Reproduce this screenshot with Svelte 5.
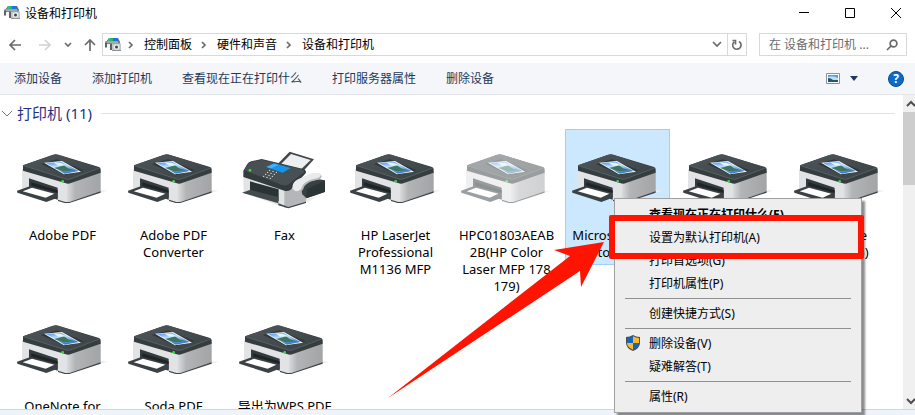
<script lang="ts">
	type Device = { name: string; kind?: 'fax'; offline?: boolean };
	type Entry = { label: string; bold?: boolean; shield?: boolean };

	const crumbs = ['控制面板', '硬件和声音', '设备和打印机'];
	const commands = ['添加设备', '添加打印机', '查看现在正在打印什么', '打印服务器属性', '删除设备'];

	const devices: Device[] = [
		{ name: 'Adobe PDF' },
		{ name: 'Adobe PDF Converter' },
		{ name: 'Fax', kind: 'fax' },
		{ name: 'HP LaserJet Professional M1136 MFP' },
		{ name: 'HPC01803AEAB2B(HP Color Laser MFP 178 179)', offline: true },
		{ name: 'Microsoft Print to PDF' },
		{ name: 'Microsoft XPS' },
		{ name: 'OneNote (Desktop)' },
		{ name: 'OneNote for' },
		{ name: 'Soda PDF' },
		{ name: '导出为WPS PDF' }
	];

	const menu: Entry[][] = [
		[
			{ label: '查看现在正在打印什么(E)', bold: true },
			{ label: '设置为默认打印机(A)' },
			{ label: '打印首选项(G)' },
			{ label: '打印机属性(P)' }
		],
		[{ label: '创建快捷方式(S)' }],
		[{ label: '删除设备(V)', shield: true }, { label: '疑难解答(T)' }],
		[{ label: '属性(R)' }]
	];

	let selected = $state(5);
	let query = $state('');
</script>

{#snippet appIcon()}
	<svg class="app-icon" viewBox="0 0 16 14" aria-hidden="true">
		<path d="M1 4 4 0h9l2 4z" fill="#60676b" />
		<path d="M4 0h3l-1 3H3z" fill="#2fc0a0" />
		<path d="M6 0h3v3H5z" fill="#37b24a" />
		<path d="M8 0h4l1 3H8z" fill="#1277e8" />
		<path d="M0 3.5h15V6H0z" fill="#7d8387" />
		<path d="M2 3.5h11v1H2z" fill="#cfd5d8" />
		<path d="M0 5h2v4.500H0zM5 6h2v6H5z" fill="#5b6165" />
		<path d="M2 6h3v4H2z" fill="#f4f6f7" />
		<path d="M7 5.500h9V13H7z" fill="#c3c7ca" />
		<path d="M7 12h9v1H7z" fill="#8e9396" />
		<circle cx="11.5" cy="9" r="2.800" fill="#eceff0" />
		<circle cx="11.5" cy="9" r="1.500" fill="#3b4448" />
	</svg>
{/snippet}

{#snippet crumbArrow()}
	<svg class="crumb-arrow" viewBox="0 0 6 8" aria-hidden="true">
		<path d="m1 1 3 3-3 3" />
	</svg>
{/snippet}

{#snippet printer()}
	<svg class="device-icon" viewBox="33 48 309 192" aria-hidden="true">
		<defs>
			<linearGradient id="lid" x1="0" y1="0" x2="1" y2="1">
				<stop offset="0" stop-color="#4f5659" />
				<stop offset="1" stop-color="#3b4245" />
			</linearGradient>
			<linearGradient id="side" x1="0" x2="1">
				<stop offset="0" stop-color="#dcdddf" />
				<stop offset=".25" stop-color="#b3b4b6" />
				<stop offset="1" stop-color="#a3a4a6" />
			</linearGradient>
			<linearGradient id="photo" x1="0" y1="0" x2=".4" y2="1">
				<stop offset="0" stop-color="#3c86e8" />
				<stop offset=".45" stop-color="#b9dcfa" />
				<stop offset="1" stop-color="#3b7fc4" />
			</linearGradient>
		</defs>
		<path d="m296 180 28 2-30 7z" fill="#ececec" />
		<path d="M66 117 207 156v61l-12 1-21-8-108-35z" fill="#e2e3e5" />
		<path d="M201 156 302 124v61l-95 32-7 1z" fill="url(#side)" />
		<path d="m174 209 22 7h12l94-32v4l-94 31h-14l-20-6z" fill="#3d4447" />
		<path d="m87 145 86 28v36l-86-30z" fill="#353c3f" />
		<path d="m94 157 79 24v8l-79-22z" fill="#1f2527" />
		<path d="m51 182 38-13 84 21v13l-34 13-87-28z" fill="#3b4245" />
		<path d="m68 184 28-11 67 18-26 12z" fill="#fff" />
		<path d="M69 106 157 75q9-4 18-1l122 37q5 2 5 7v10l-89 31q-8 4-18 0L69 122z" fill="#363d40" />
		<path d="M70 106 158 75q8-3 16-1l124 39-85 33q-9 4-18 1z" fill="url(#lid)" />
		<path d="m70 107 128 40q8 2 15-1l86-32" fill="none" stroke="#646c70" stroke-width="2" />
		<path d="m123 102 48-14 80 33-54 14z" fill="#30373a" />
		<path d="m132 98 54-5 57 32-51 8z" fill="#f8fbfd" />
		<path d="m138 99 46-4 52 28-42 8z" fill="url(#photo)" />
		<path d="m163 114 12-3 17-5 12 9 20 6-34 3z" fill="#3d7462" />
		<path d="m160 97 21 1 16 8-22 1z" fill="#e7f4fe" />
		<circle cx="188" cy="154" r="4" fill="#35e23c" />
	</svg>
{/snippet}

{#snippet fax()}
	<svg class="device-icon" viewBox="24 48 309 192" aria-hidden="true">
		<path d="m240 206 33-4-29 16z" fill="#ececec" />
		<path d="m160 100 34-35 73 23-38 42z" fill="#41484b" />
		<path d="m169 101 29-29 59 18-35 34z" fill="#edf0f2" />
		<path d="M55 140 180 172l63 15v30l-53 16-34-9-100-35z" fill="#e2e3e5" />
		<path d="m178 170 65 15v32l-53 16h-12z" fill="#b4b6b8" />
		<path d="m160 220 30 11 53-16v4l-53 16-30-9z" fill="#3d4447" />
		<path d="m75 154 86 24v36l-86-29z" fill="#2b3235" />
		<path d="m51 188 25-9 84 22v19z" fill="#434b4e" />
		<path d="M55 122 67 102q4-6 12-8l31-7 122 29q14 4 10 14l-40 43q-8 13-24 9L55 141z" fill="#343b3e" />
		<path d="M58 121 69 103q4-6 12-8l30-6 119 29q10 3 7 9l-46 36q-8 5-20 2z" fill="#485053" />
		<path d="m123 111 24-11 50 14-24 14z" fill="#1496ee" />
		<path d="m125 111 22-10 14 4-22 10z" fill="#44b4fa" />
		<g fill="#eef1f2">
			{#each [0, 1, 2, 3] as row}
				{#each [0, 1, 2] as col}
					<circle cx={134 + col * 10 - row * 6} cy={121 + col * 3 + row * 6} r="2" />
				{/each}
			{/each}
		</g>
		<path d="m228 178 8-20 46-10 18 3v34l-56 20-12-12z" fill="#3a4144" />
		<path d="m246 176 54-24v34l-56 19z" fill="#2d3437" />
		<path
			d="M203 178q-3-19 15-28l44-20q22-4 28 8 0 9-12 11-28 4-40 20-6 20-20 22-12 0-15-13z"
			fill="#b5b8ba"
		/>
		<path
			d="M203 171q0-15 16-23l44-19q19-3 25 6-2 8-12 10-30 4-43 21-5 16-17 18-11 0-13-13z"
			fill="#e9ebec"
		/>
		<circle cx="75" cy="121" r="4" fill="#35e23c" />
	</svg>
{/snippet}

<div class="window">
	<header class="titlebar">
		{@render appIcon()}
		<h1>设备和打印机</h1>
		<div class="caption-buttons">
			<button type="button" aria-label="最小化">
				<svg viewBox="0 0 10 10"><path d="M0 4.5h10" /></svg>
			</button>
			<button type="button" aria-label="最大化">
				<svg viewBox="0 0 10 10"><path d="M.5.5h9v9h-9z" /></svg>
			</button>
			<button type="button" aria-label="关闭">
				<svg viewBox="0 0 10 10"><path d="m0 0 10 10M10 0 0 10" /></svg>
			</button>
		</div>
	</header>

	<nav class="navbar">
		<div class="history">
			<button type="button" aria-label="后退">
				<svg width="14" height="12" viewBox="0 0 14 12"><path d="M13 6H2m5-5L2 6l5 5" /></svg>
			</button>
			<button type="button" aria-label="前进" disabled>
				<svg width="14" height="12" viewBox="0 0 14 12"><path d="M1 6h11M7 1l5 5-5 5" /></svg>
			</button>
			<button class="recent" type="button" aria-label="最近">
				<svg width="8" height="6" viewBox="0 0 8 6"><path d="m1 1 3 3 3-3" /></svg>
			</button>
			<button type="button" aria-label="向上">
				<svg width="12" height="14" viewBox="0 0 12 14"><path d="M6 13V2M1 7l5-5 5 5" /></svg>
			</button>
		</div>
		<div class="address">
			{@render appIcon()}
			{#each crumbs as crumb}
				{@render crumbArrow()}
				<button class="crumb" type="button">{crumb}</button>
			{/each}
			<button class="drop" type="button" aria-label="展开">
				<svg width="10" height="7" viewBox="0 0 10 7"><path d="m1 1 4 4 4-4" /></svg>
			</button>
			<button class="refresh" type="button" aria-label="刷新">
				<svg width="12" height="12" viewBox="0 0 12 12">
					<path d="M8 2.4a4.2 4.2 0 1 1-4.800.4M1.500 1.500h3v4" />
				</svg>
			</button>
		</div>
		<label class="search">
			<input type="text" placeholder="在 设备和打印机 ..." aria-label="搜索" bind:value={query} />
			<svg width="12" height="12" viewBox="0 0 12 12" aria-hidden="true">
				<circle cx="7.5" cy="4.5" r="3.4" />
				<path d="M5 7 1 11" />
			</svg>
		</label>
	</nav>

	<div class="commands">
		{#each commands as command}
			<button type="button">{command}</button>
		{/each}
		<button class="view" type="button" aria-label="视图">
			<svg width="14" height="11" viewBox="0 0 14 11">
				<path d="M.5.5h13v10H.5z" fill="#fff" stroke="#8c8f94" />
				<path d="M2 2h10v3H2z" fill="#4d9be8" />
				<path d="M2 4q5-2 10 1v3H2z" fill="#b9def8" />
				<path d="M2 5q3 0 5 2h5v2H2z" fill="#26566f" />
			</svg>
		</button>
		<button class="view-more" type="button" aria-label="更多选项">
			<svg width="8" height="5" viewBox="0 0 8 5"><path d="M0 0h8L4 5z" fill="#1e395b" /></svg>
		</button>
		<button class="help" type="button" aria-label="帮助">?</button>
	</div>

	<div class="body">
		<main>
			<h2>
				<svg width="12" height="7" viewBox="0 0 12 7" aria-hidden="true">
					<path d="m1 1 5 5 5-5" fill="none" stroke="#777" />
				</svg>
				打印机 (11)
			</h2>
			<div class="devices">
				{#each devices as device, i}
					<button
						class="device"
						class:selected={selected === i}
						class:offline={device.offline}
						type="button"
						onclick={() => (selected = i)}
					>
						{#if device.kind === 'fax'}
							{@render fax()}
						{:else}
							{@render printer()}
						{/if}
						<span>{device.name}</span>
					</button>
				{/each}
			</div>
		</main>
		<div class="scrollbar">
			<svg viewBox="0 0 12 17" aria-hidden="true"><path d="m4 11 4-4 4 4" /></svg>
			<div class="track"><div class="thumb"></div></div>
			<svg viewBox="0 0 12 17" aria-hidden="true"><path d="m4 7 4 4 4-4" /></svg>
		</div>
	</div>
	<footer></footer>

	<div class="menu" role="menu">
		{#each menu as group}
			<div class="group" role="group">
				{#each group as entry}
					<button class:bold={entry.bold} type="button" role="menuitem">
						{#if entry.shield}
							<svg class="shield" viewBox="0 0 14 16" aria-hidden="true">
								<path d="M7 0q3 2 7 2v6q0 5-7 8-7-3-7-8V2q4 0 7-2z" fill="#4a4f55" />
								<path d="M7 1.3V8H1V3q3 0 6-1.700z" fill="#0b67c9" />
								<path d="M7 1.3V8h6V3q-3 0-6-1.700z" fill="#fdb827" />
								<path d="M1 8h6v6.800Q1 12 1 8z" fill="#fdb827" />
								<path d="M13 8H7v6.800Q13 12 13 8z" fill="#0b67c9" />
							</svg>
						{/if}
						{entry.label}
					</button>
				{/each}
			</div>
		{/each}
	</div>

	<svg class="arrow" viewBox="0 0 217 156" aria-hidden="true">
		<path d="M216 0 166 8l16 6L0 156l192-127 1 16z" fill="#fe1400" />
	</svg>
	<div class="frame"></div>
</div>

<style>
	:global(body) {
		margin: 0;
	}
	.window {
		position: relative;
		display: flex;
		flex-direction: column;
		height: 100vh;
		overflow: hidden;
		background: #fff;
		color: #000;
		font-family: 'Noto Sans', 'Noto Sans CJK SC', sans-serif;
		font-size: 12px;
		line-height: 17px;
	}
	button {
		border: none;
		background: transparent;
		padding: 0;
		color: inherit;
		font: inherit;
	}
	svg {
		display: block;
		flex: none;
	}
	.app-icon {
		width: 16px;
		height: 14px;
	}

	.titlebar {
		display: flex;
		align-items: center;
		gap: 5px;
		height: 26px;
		padding-left: 4px;
	}
	h1 {
		margin: 0;
		font-size: 12px;
		font-weight: normal;
	}
	.caption-buttons {
		display: flex;
		gap: 8px;
		margin-left: auto;
	}
	.caption-buttons button {
		display: flex;
		align-items: center;
		justify-content: center;
		width: 38px;
		height: 24px;
	}
	.caption-buttons svg {
		width: 10px;
		height: 10px;
		fill: none;
		stroke: #000;
	}

	.navbar {
		display: flex;
		align-items: center;
		padding: 7px 8px;
	}
	.navbar svg:not(.app-icon) {
		fill: none;
		stroke: #6b6b6b;
		stroke-width: 1.7;
	}
	.history {
		display: flex;
		align-items: center;
		gap: 16px;
		width: 94px;
	}
	.history button:disabled svg {
		stroke: #d2d2d2;
	}
	.history .recent {
		margin: 0 -4px;
	}
	.address {
		display: flex;
		flex: 1;
		align-items: center;
		box-sizing: border-box;
		height: 23px;
		border: 1px solid #d9d9d9;
		padding-left: 2px;
	}
	.address .app-icon {
		margin-right: -2px;
	}
	.crumb-arrow {
		width: 6px;
		height: 8px;
		margin: 0 10px 0 9px;
	}
	.drop {
		margin-left: auto;
		padding-right: 5px;
	}
	.refresh {
		display: flex;
		align-items: center;
		justify-content: center;
		width: 19px;
		height: 21px;
		border-left: 1px solid #d9d9d9;
	}
	.search {
		display: flex;
		align-items: center;
		box-sizing: border-box;
		width: 148px;
		height: 23px;
		margin-left: 12px;
		border: 1px solid #d9d9d9;
		padding: 0 8px 0 9px;
	}
	input {
		flex: 1;
		min-width: 0;
		border: none;
		outline: none;
		background: transparent;
		padding: 0;
		font: inherit;
	}
	input::placeholder {
		color: #6d6d6d;
	}

	.commands {
		display: flex;
		align-items: center;
		gap: 30px;
		height: 31px;
		border-bottom: 1px solid #e3e6ea;
		background: #f4f6f9;
		padding: 0 11px 0 14px;
		color: #1e395b;
	}
	.view {
		margin-left: auto;
	}
	.view-more {
		margin-left: -20px;
	}
	.help {
		width: 16px;
		height: 16px;
		box-sizing: border-box;
		border: 1px solid #0a4c8f;
		border-radius: 50%;
		background: #0b6bcb;
		color: #fff;
		font-weight: bold;
		line-height: 14px;
	}

	.body {
		display: flex;
		flex: 1;
		min-height: 0;
	}
	main {
		flex: 1;
		overflow: hidden;
	}
	h2 {
		display: flex;
		align-items: center;
		gap: 4px;
		height: 30px;
		margin: 3px 8px 1px 1px;
		color: #1e3287;
		font-size: 15px;
		font-weight: normal;
	}
	h2::after {
		content: '';
		flex: 1;
		height: 1px;
		margin-left: 5px;
		background: #e2e2e2;
	}
	.devices {
		display: grid;
		grid-template-columns: repeat(auto-fill, 105px);
		align-items: start;
		gap: 1px 6px;
		padding-left: 10px;
	}
	.device {
		display: flex;
		flex-direction: column;
		align-items: center;
		border: 1px solid transparent;
		padding: 16px 0 3px;
		font-size: 13px;
	}
	.device.selected {
		border-color: #99d1ff;
		background: #cce8ff;
	}
	.device-icon {
		width: 103px;
		height: 64px;
	}
	.offline .device-icon {
		opacity: 0.5;
	}
	.device span {
		width: 99px;
		margin-top: 17px;
		overflow-wrap: anywhere;
	}

	.scrollbar {
		display: flex;
		flex-direction: column;
		width: 12px;
		background: #f0f0f0;
	}
	.scrollbar svg {
		width: 12px;
		height: 17px;
		fill: none;
		stroke: #505050;
		stroke-width: 2;
	}
	.track {
		flex: 1;
	}
	.thumb {
		height: 26%;
		background: #cdcdcd;
	}
	footer {
		height: 5px;
		border-top: 1px solid #cbd7e6;
		background: #eff4fb;
	}

	.menu {
		position: absolute;
		top: 198px;
		left: 614px;
		box-sizing: border-box;
		width: 248px;
		border: 1px solid #a0a0a0;
		background: #eee;
		padding: 4px 0;
		box-shadow: 3px 3px 2px rgba(0, 0, 0, 0.45);
	}
	.group + .group::before {
		content: '';
		display: block;
		height: 1px;
		margin: 3px 10px;
		background: #919191;
	}
	.menu button {
		position: relative;
		display: block;
		width: 100%;
		padding: 3px 0 3px 34px;
		text-align: left;
	}
	.menu .bold {
		font-weight: bold;
	}
	.shield {
		position: absolute;
		top: 3px;
		left: 11px;
		width: 14px;
		height: 16px;
	}
	.arrow {
		position: absolute;
		top: 242px;
		left: 388px;
		width: 217px;
		height: 156px;
	}
	.frame {
		position: absolute;
		top: 215px;
		left: 609px;
		box-sizing: border-box;
		width: 255px;
		height: 44px;
		border: 6px solid #fe1400;
		border-radius: 2px;
		pointer-events: none;
	}
</style>
